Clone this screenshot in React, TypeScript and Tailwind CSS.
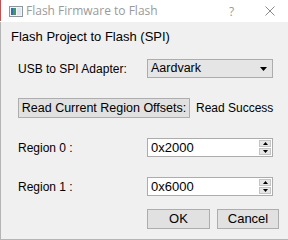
import React from "react";

function Spinner() {
  return (
    <div className="flex flex-col w-[13px] h-full shrink-0 py-px pr-px gap-px">
      <div className="flex-1 flex items-center justify-center bg-[#e6e6e6] border border-[#c4c4c4]">
        <svg width="5" height="3" viewBox="0 0 5 3"><path d="M2.5 0 L5 3 L0 3 Z" fill="#000" /></svg>
      </div>
      <div className="flex-1 flex items-center justify-center bg-[#e6e6e6] border border-[#c4c4c4]">
        <svg width="5" height="3" viewBox="0 0 5 3"><path d="M0 0 L5 0 L2.5 3 Z" fill="#000" /></svg>
      </div>
    </div>
  );
}

function SpinRow({ label, value }: { label: string; value: string }) {
  return (
    <div className="flex items-center h-[19px]">
      <div className="w-[146px] shrink-0 pl-[17px]">{label}</div>
      <div className="w-[126px] shrink-0 h-[19px] bg-white border border-[#acacac] flex items-stretch">
        <div className="flex-1 pl-[3px] leading-[17px] text-[13px]">{value}</div>
        <Spinner />
      </div>
    </div>
  );
}

export default function App() {
  return (
    <div
      className="w-[288px] h-[240px] flex flex-col bg-[#f0f0f0] text-black text-[12px] overflow-hidden whitespace-nowrap"
      style={{ fontFamily: '"Liberation Sans", Arial, sans-serif' }}
    >
      <div className="h-[22px] bg-white flex items-center relative shrink-0">
        <div className="absolute left-0 top-0 w-px h-[21px] bg-[#d24b4b]" />
        <svg className="ml-[9px]" width="14" height="11" viewBox="0 0 14 11">
          <rect x="0.5" y="0.5" width="13" height="10" fill="#f2f4f6" stroke="#8a97a8" />
          <rect x="2" y="2" width="5" height="7" fill="#3f9a6a" />
          <rect x="2" y="2" width="2" height="7" fill="#2f6fb0" />
          <rect x="8" y="2" width="4" height="7" fill="#dfe6ee" />
        </svg>
        <div
          className="ml-[3px] text-[12px] text-[#9a9a9a]"
          style={{ fontFamily: '"Open Sans", "Noto Sans", sans-serif' }}
        >
          Flash Firmware to Flash
        </div>
        <div
          className="absolute left-[229px] top-[3px] text-[12px] text-[#9a9a9a]"
          style={{ fontFamily: '"Open Sans", "Noto Sans", sans-serif' }}
        >
          ?
        </div>
        <svg className="absolute left-[265px] top-[6px]" width="10" height="10" viewBox="0 0 10 10">
          <path d="M0.5 0.5 L9.5 9.5 M9.5 0.5 L0.5 9.5" stroke="#8a8a8a" strokeWidth="1" />
        </svg>
      </div>
      <div className="flex-1 flex flex-col border-l border-b border-[#b5b5b5]">
        <div className="mt-[7px] pl-[10px] leading-[16px] text-[13px]">Flash Project to Flash (SPI)</div>

        <div className="mt-[14px] flex items-center h-[19px]">
          <div className="w-[146px] shrink-0 pl-[17px]">USB to SPI Adapter:</div>
          <div className="w-[126px] shrink-0 h-[19px] bg-[#e5e5e5] border border-[#acacac] flex items-center justify-between pl-[3px] pr-[5px]">
            <span className="text-[12.5px]">Aardvark</span>
            <svg width="7" height="4" viewBox="0 0 7 4"><path d="M0 0 L7 0 L3.5 4 Z" fill="#000" /></svg>
          </div>
        </div>

        <div className="mt-[20px] flex items-center h-[20px]">
          <div className="ml-[17px] w-[172px] shrink-0 h-[20px] bg-[#e1e1e1] border border-[#adadad] flex items-center justify-center text-[12.5px]">
            Read Current Region Offsets:
          </div>
          <div className="ml-[6px] text-[12px]">Read Success</div>
        </div>

        <div className="mt-[20px]">
          <SpinRow label="Region 0 :" value="0x2000" />
        </div>
        <div className="mt-[20px]">
          <SpinRow label="Region 1 :" value="0x6000" />
        </div>

        <div className="mt-[13px] flex ml-[146px] gap-[7px]">
          <div className="w-[63px] h-[20px] bg-[#e1e1e1] border border-[#adadad] flex items-center justify-center text-[13px]">OK</div>
          <div className="w-[62px] h-[20px] bg-[#e1e1e1] border border-[#adadad] flex items-center justify-center text-[13px]">Cancel</div>
        </div>
      </div>
    </div>
  );
}
